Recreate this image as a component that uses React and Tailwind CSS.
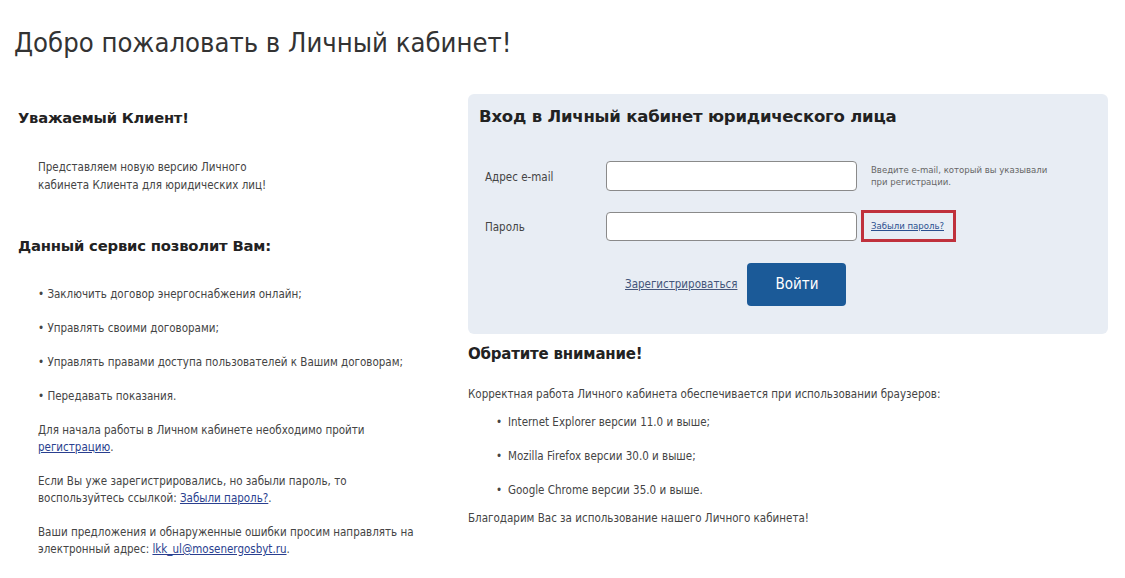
import React from "react";

const f = { fontFamily: '"DejaVu Sans", Verdana, sans-serif' };

export default function App() {
  return (
    <div className="w-[1125px] h-[578px] bg-white text-[#333] overflow-hidden font-stretch-condensed" style={f}>
      <h1 className="pl-[14px] pt-[26px] text-[27.2px] leading-[34px] text-[#333] font-normal">
        Добро пожаловать в Личный кабинет!
      </h1>
      <div className="flex mt-[34px]">
        <div className="w-[468px] shrink-0 pl-[18px]">
          <h2 className="mt-[14px] text-[14.7px] font-bold leading-[20px] text-[#222] font-stretch-normal tracking-[-0.2px]">Уважаемый Клиент!</h2>
          <p className="mt-[30px] pl-[20px] text-[11.5px] leading-[18px] text-[#444] w-[260px]">
            Представляем новую версию Личного<br />кабинета Клиента для юридических лиц!
          </p>
          <h2 className="mt-[42px] text-[14.8px] font-bold leading-[20px] text-[#222] font-stretch-normal tracking-[-0.2px]">Данный сервис позволит Вам:</h2>
          <ul className="mt-[29px] pl-[20px] text-[11.5px] leading-[18px] text-[#444] flex flex-col gap-[16px]">
            <li>• Заключить договор энергоснабжения онлайн;</li>
            <li>• Управлять своими договорами;</li>
            <li>• Управлять правами доступа пользователей к Вашим договорам;</li>
            <li>• Передавать показания.</li>
          </ul>
          <div className="mt-[17px] pl-[20px] text-[11.5px] leading-[17px] text-[#444] flex flex-col gap-[17px] w-[440px]">
            <p>
              Для начала работы в Личном кабинете необходимо пройти<br />
              <a className="underline text-[#2a3f8f]">регистрацию</a>.
            </p>
            <p>
              Если Вы уже зарегистрировались, но забыли пароль, то<br />
              воспользуйтесь ссылкой: <a className="underline text-[#2a3f8f]">Забыли пароль?</a>.
            </p>
            <p>
              Ваши предложения и обнаруженные ошибки просим направлять на<br />
              электронный адрес: <a className="underline text-[#2a3f8f]">lkk_ul@mosenergosbyt.ru</a>.
            </p>
          </div>
        </div>
        <div className="w-[640px] shrink-0">
          <div className="bg-[#e8edf4] rounded-[6px] h-[240px] pt-[12px] pl-[11px]">
            <h2 className="text-[16.5px] font-bold leading-[22px] text-[#222] font-stretch-normal tracking-[-0.2px]">Вход в Личный кабинет юридического лица</h2>
            <div className="mt-[33px] flex items-center">
              <span className="w-[127px] pl-[6px] text-[11.5px] text-[#444] pt-[3px]">Адрес e-mail</span>
              <div className="w-[251px] h-[30px] bg-white border border-[#8a8a8a] rounded-[4px]" />
              <span className="ml-[14px] text-[9.5px] leading-[12px] text-[#666] w-[185px]">
                Введите e-mail, который вы указывали при регистрации.
              </span>
            </div>
            <div className="mt-[19px] flex items-center">
              <span className="w-[127px] pl-[6px] text-[11.5px] text-[#444] pt-[3px]">Пароль</span>
              <div className="w-[251px] h-[29px] bg-white border border-[#8a8a8a] rounded-[4px]" />
              <div className="ml-[4px] w-[95px] h-[32px] border-[3px] border-[#c0313c] flex items-center pl-[7px]">
                <a className="text-[9.5px] underline text-[#2a4f8f]">Забыли пароль?</a>
              </div>
            </div>
            <div className="mt-[21px] flex items-center">
              <a className="ml-[146px] text-[11.5px] text-[#44557a] underline">Зарегистрироваться</a>
              <button className="ml-[10px] w-[99px] h-[43px] rounded-[4px] bg-[#1b5a98] text-white text-[15px]">
                Войти
              </button>
            </div>
          </div>
          <h2 className="mt-[10px] text-[15px] font-bold leading-[20px] text-[#222] font-stretch-normal tracking-[-0.2px]">Обратите внимание!</h2>
          <p className="mt-[21px] text-[11.5px] leading-[18px] text-[#444]">
            Корректная работа Личного кабинета обеспечивается при использовании браузеров:
          </p>
          <ul className="mt-[10px] pl-[28px] text-[11.5px] leading-[18px] text-[#444] flex flex-col gap-[16px]">
            <li className="flex"><span className="w-[12px]">•</span>Internet Explorer версии 11.0 и выше;</li>
            <li className="flex"><span className="w-[12px]">•</span>Mozilla Firefox версии 30.0 и выше;</li>
            <li className="flex"><span className="w-[12px]">•</span>Google Chrome версии 35.0 и выше.</li>
          </ul>
          <p className="mt-[10px] text-[11.5px] leading-[18px] text-[#444]">
            Благодарим Вас за использование нашего Личного кабинета!
          </p>
        </div>
      </div>
    </div>
  );
}
